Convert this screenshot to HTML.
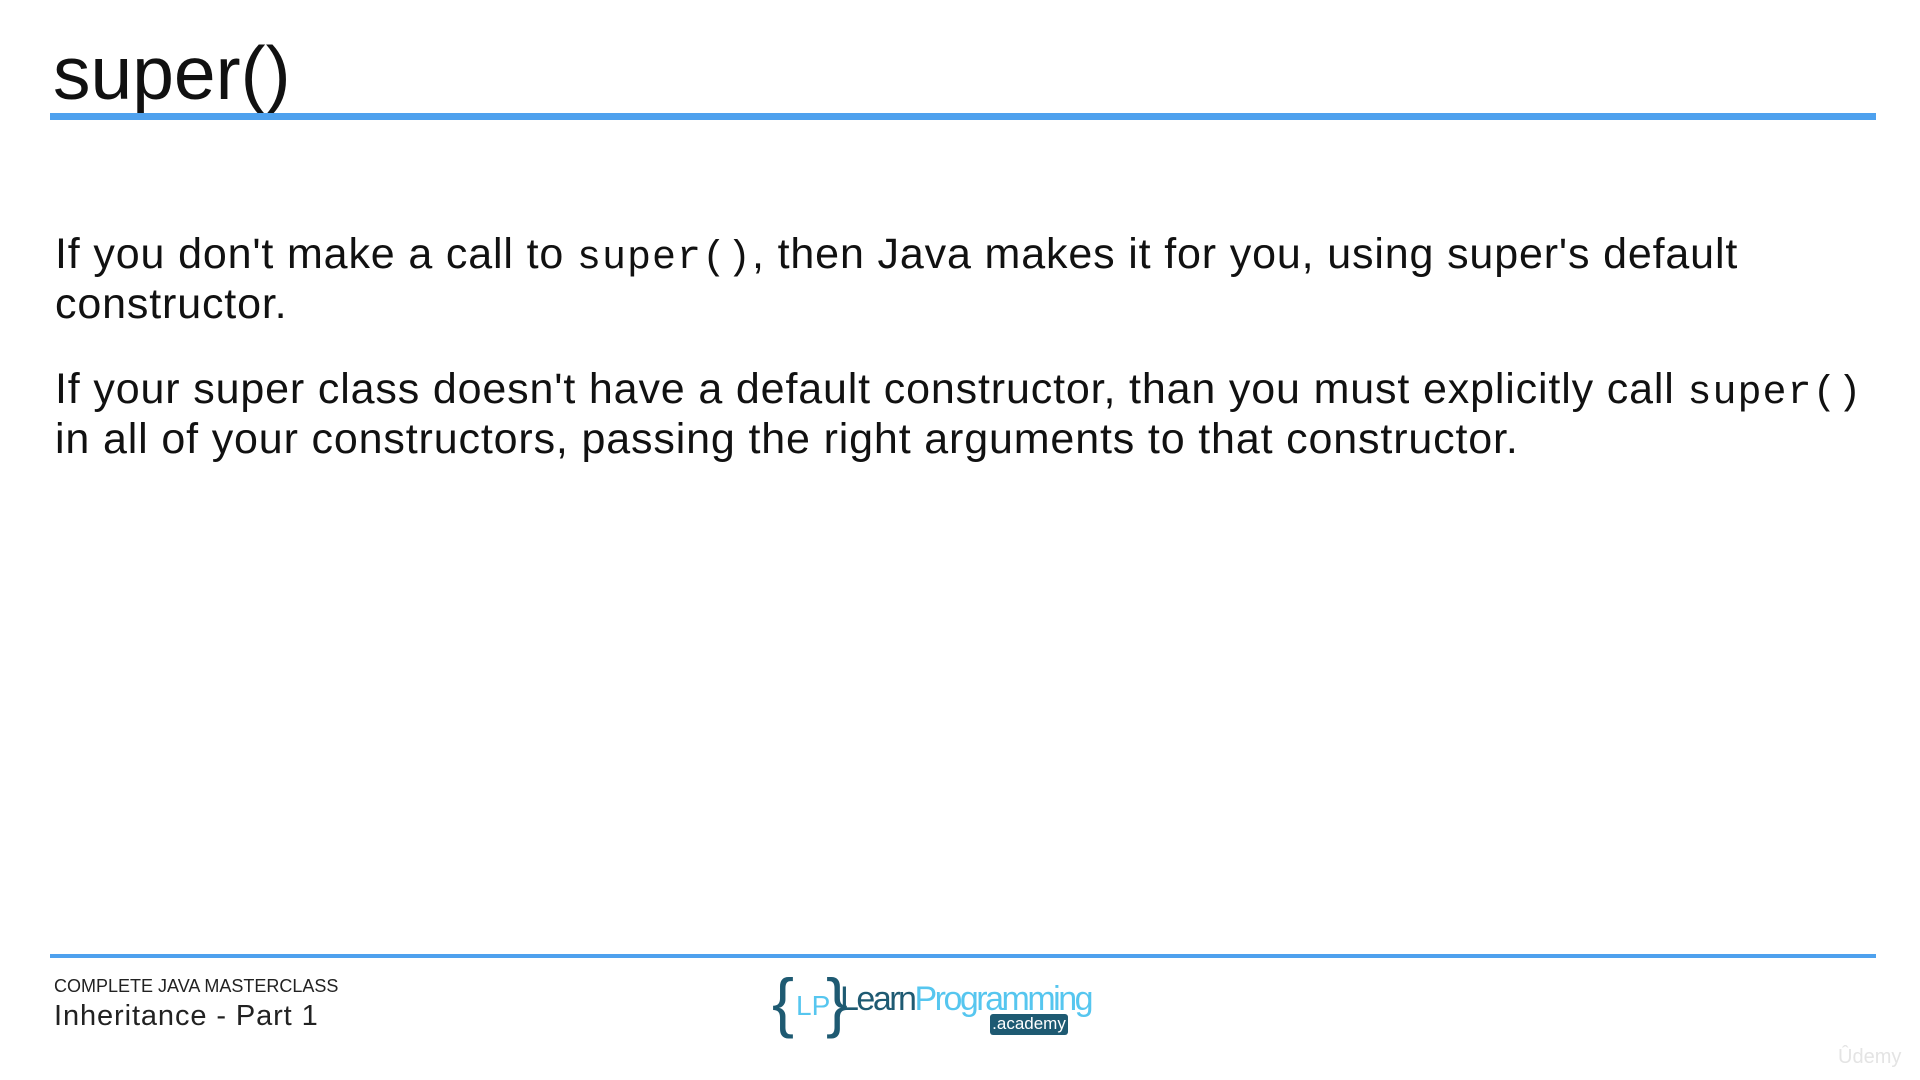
<!DOCTYPE html>
<html><head><meta charset="utf-8"><style>
body{margin:0;width:1920px;height:1080px;background:#fff;position:relative;overflow:hidden;font-family:"Liberation Sans",sans-serif;color:#111}
.a{position:absolute;white-space:nowrap}
.t{left:53px;top:30px;font-size:75px;}
.bar{position:absolute;left:50px;width:1826px;background:#4ea1ee}
.p{font-size:43px;letter-spacing:0.85px;left:55px}
code{font-family:"Liberation Mono",monospace;font-size:40px;letter-spacing:1px}
</style></head><body>
<div class="a t">super()</div>
<div class="bar" style="top:113px;height:7px"></div>
<div class="a p" style="top:230px">If you don't make a call to <code>super()</code>, then Java makes it for you, using super's default</div>
<div class="a p" style="top:280px">constructor.</div>
<div class="a p" style="top:365px">If your super class doesn't have a default constructor, than you must explicitly call <code>super()</code></div>
<div class="a p" style="top:415px">in all of your constructors, passing the right arguments to that constructor.</div>
<div class="bar" style="top:954px;height:4px"></div>
<div class="a" style="left:54px;top:976px;font-size:18px;color:#222">COMPLETE JAVA MASTERCLASS</div>
<div class="a" style="left:54px;top:1000px;font-size:29px;letter-spacing:0.9px;color:#222">Inheritance - Part 1</div>
<div class="a" style="left:772px;top:964px;font-size:66px;color:#1e5a72;font-weight:300">{</div>
<div class="a" style="left:796px;top:990px;font-size:28px;color:#56c6ef">LP</div>
<div class="a" style="left:826px;top:964px;font-size:66px;color:#1e5a72">}</div>
<div class="a" style="left:840px;top:980px;font-size:34px;letter-spacing:-2.5px;color:#1e5a72">Learn<span style="color:#56c6ef">Programming</span></div>
<div class="a" style="left:990px;top:1014px;width:78px;height:21px;background:#1e5a72;border-radius:3px;color:#fff;font-size:17px;text-align:center;line-height:20px">.academy</div>
<div class="a" style="left:1838px;top:1046px;font-size:20px;color:#e4e4e4">Ûdemy</div>
</body></html>
